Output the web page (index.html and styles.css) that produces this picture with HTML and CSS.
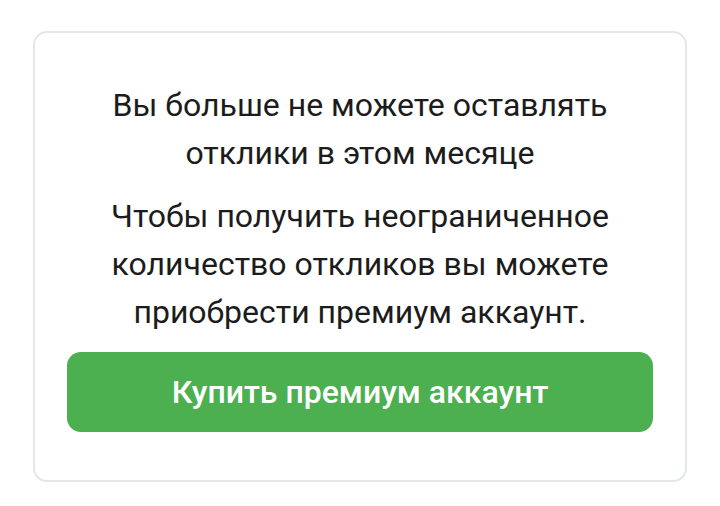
FILE: index.html
```html
<!DOCTYPE html>
<html lang="ru">

<head>
  <meta charset="UTF-8">
  <meta name="viewport" content="width=device-width, initial-scale=1.0">
  <title>Лимит откликов</title>
  <link rel="stylesheet" href="styles.css">
</head>

<body>
  <div class="limit-card">
    <p class="limit-title">Вы больше не можете оставлять отклики в этом месяце</p>
    <p class="limit-text">Чтобы получить неограниченное количество откликов вы можете приобрести премиум аккаунт.</p>
    <a class="buy-button" href="#">Купить премиум аккаунт</a>
  </div>
</body>

</html>
```

FILE: styles.css
```css
body {
  margin: 0;
  padding: 31px 33px 25px;
  background: #fff;
  font-family: Roboto, "Noto Sans", sans-serif;
  color: #1c1c1c;
}

.limit-card {
  display: flex;
  flex-direction: column;
  align-items: stretch;
  padding: 48px 32px 48px;
  border: 2px solid #e3e7ea;
  border-radius: 14px;
  text-align: center;
}

.limit-title,
.limit-text {
  margin: 0 auto;
  max-width: 540px;
  font-size: 32px;
  line-height: 48px;
}

.limit-text {
  margin-top: 15px;
  margin-bottom: 16px;
}

.buy-button {
  display: flex;
  align-items: center;
  justify-content: center;
  height: 80px;
  border-radius: 14px;
  background: #4cb050;
  color: #fff;
  font-size: 32px;
  font-weight: 500;
  text-decoration: none;
}
```
